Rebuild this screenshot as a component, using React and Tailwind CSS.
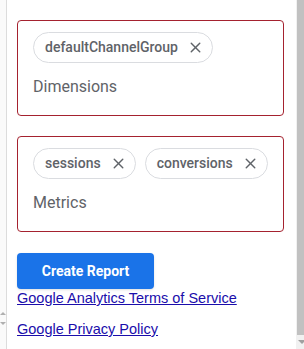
import { X } from 'lucide-react';

const Chip = ({ label }) => (
  <span className="inline-flex items-center h-[31px] pl-[11px] pr-[8px] gap-[9px] rounded-full border border-[#dadce0] text-[14px] font-medium text-[#5f6368]">
    {label}
    <X size={17} strokeWidth={2} className="text-[#5f6368]" />
  </span>
);

const FieldBox = ({ chips, label }) => (
  <div className="border border-[#a5222f] rounded-[4px] pt-[11px] pb-[16px] px-[15px]">
    <div className="flex gap-[9px]">
      {chips.map((c) => (
        <Chip key={c} label={c} />
      ))}
    </div>
    <div className="mt-[12px] text-[16px] leading-[24px] text-[#5f6368]">{label}</div>
  </div>
);

const Arrow = ({ up }) => (
  <span
    className={
      up
        ? 'w-0 h-0 border-x-[3px] border-x-transparent border-b-[3px] border-b-[#b0b0b0]'
        : 'w-0 h-0 border-x-[3px] border-x-transparent border-t-[3px] border-t-[#b0b0b0]'
    }
  />
);

export default function App() {
  return (
    <div className="flex w-[304px] h-[349px] overflow-hidden bg-white" style={{ fontFamily: 'Roboto, "Liberation Sans", sans-serif' }}>
      {/* sliver of the neighbouring pane */}
      <div className="w-[7px] shrink-0 border-r border-[#dcdcdc] bg-[#fafafa] flex flex-col justify-end pb-[24px] items-center gap-[7px]">
        <Arrow up />
        <Arrow />
      </div>

      <div className="flex-1 pl-[10px] pr-[12px] pt-[20px]">
        <FieldBox chips={['defaultChannelGroup']} label="Dimensions" />
        <div className="mt-[20px]">
          <FieldBox chips={['sessions', 'conversions']} label="Metrics" />
        </div>

        <button className="mt-[21px] w-[137px] h-[36px] rounded-[4px] bg-[#1a73e8] text-white text-[14px] font-bold shadow-sm">
          Create Report
        </button>
        <div style={{ fontFamily: '"Liberation Sans", Arial, sans-serif' }}>
          <a href="#" className="block text-[14.5px] leading-[20px] text-[#1a0dab] underline -mt-[1px]">
            Google Analytics Terms of Service
          </a>
          <a href="#" className="block mt-[11px] text-[14.5px] leading-[20px] text-[#1a0dab] underline">
            Google Privacy Policy
          </a>
        </div>
      </div>

      {/* scrollbar */}
      <div className="w-[13px] shrink-0 bg-[#f1f1f1] flex flex-col">
        <div className="flex-1 bg-[#c1c1c1] ml-[1px]"></div>
        <div className="h-[14px] flex items-center justify-center">
          <span className="w-0 h-0 border-x-[4px] border-x-transparent border-t-[4px] border-t-[#a0a0a0]" />
        </div>
      </div>
    </div>
  );
}
